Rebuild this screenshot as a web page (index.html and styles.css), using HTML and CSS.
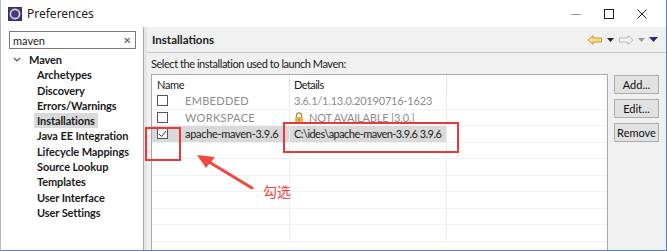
FILE: index.html
```html
<!DOCTYPE html>
<html lang="zh-CN">
<head>
  <meta charset="UTF-8">
  <title>Preferences</title>
  <link rel="stylesheet" href="styles.css">
</head>
<body>
  <div class="window">
    <div class="titlebar">
      <svg class="app-icon" width="14" height="14" viewBox="0 0 14 14">
        <rect x="0.5" y="0.5" width="13" height="13" fill="#4b3b78" stroke="#3a2c63"/>
        <circle cx="7" cy="7" r="4.6" fill="none" stroke="#d8d8e0" stroke-width="1.6"/>
        <circle cx="7" cy="7" r="2.2" fill="#4b3b78"/>
      </svg>
      <span class="title">Preferences</span>
      <div class="win-controls">
        <span class="win-btn">
          <svg width="12" height="12" viewBox="0 0 12 12"><line x1="1" y1="6.5" x2="11" y2="6.5" stroke="#999" stroke-width="1"/></svg>
        </span>
        <span class="win-btn">
          <svg width="12" height="12" viewBox="0 0 12 12"><rect x="1.5" y="1.5" width="9" height="9" fill="none" stroke="#222" stroke-width="1"/></svg>
        </span>
        <span class="win-btn">
          <svg width="12" height="12" viewBox="0 0 12 12"><path d="M1.5 1.5 L10.5 10.5 M10.5 1.5 L1.5 10.5" stroke="#222" stroke-width="1"/></svg>
        </span>
      </div>
    </div>

    <div class="main">
      <div class="sidebar">
        <div class="search">
          <span>maven</span>
          <span class="clear">✕</span>
        </div>
        <ul class="tree">
          <li class="root">
            <svg class="chev" width="8" height="6" viewBox="0 0 8 6"><path d="M1 1 L4 4 L7 1" fill="none" stroke="#555" stroke-width="1.2"/></svg>
            Maven
          </li>
          <li>Archetypes</li>
          <li>Discovery</li>
          <li>Errors/Warnings</li>
          <li class="selected">Installations</li>
          <li>Java EE Integration</li>
          <li>Lifecycle Mappings</li>
          <li>Source Lookup</li>
          <li>Templates</li>
          <li>User Interface</li>
          <li>User Settings</li>
        </ul>
      </div>

      <div class="content">
        <div class="page-head">
          <span class="page-title">Installations</span>
          <div class="nav">
            <svg width="16" height="12" viewBox="0 0 16 12"><path d="M1 6 L6 1.5 L6 4 L14.5 4 L14.5 8 L6 8 L6 10.5 Z" fill="#f6dc8e" stroke="#c99b2c" stroke-width="1"/></svg>
            <svg width="7" height="4" viewBox="0 0 7 4"><path d="M0 0 L7 0 L3.5 4 Z" fill="#222"/></svg>
            <svg width="16" height="12" viewBox="0 0 16 12"><path d="M15 6 L10 1.5 L10 4 L1.5 4 L1.5 8 L10 8 L10 10.5 Z" fill="#f4f4f4" stroke="#bbb" stroke-width="1"/></svg>
            <svg width="7" height="4" viewBox="0 0 7 4"><path d="M0 0 L7 0 L3.5 4 Z" fill="#999"/></svg>
            <svg width="9" height="5" viewBox="0 0 9 5"><path d="M0 0 L9 0 L4.5 5 Z" fill="#3b2570"/></svg>
          </div>
        </div>

        <div class="page-body">
          <p class="hint">Select the installation used to launch Maven:</p>
          <div class="table-area">
            <div class="table">
              <div class="row head">
                <div class="cell c-name">Name</div>
                <div class="cell c-details">Details</div>
                <div class="cell c-rest"></div>
              </div>
              <div class="row dim">
                <div class="cell c-name"><span class="check"></span><span class="label">EMBEDDED</span></div>
                <div class="cell c-details">3.6.1/1.13.0.20190716-1623</div>
                <div class="cell c-rest"></div>
              </div>
              <div class="row dim">
                <div class="cell c-name"><span class="check"></span><span class="label">WORKSPACE</span></div>
                <div class="cell c-details">
                  <svg class="lock" width="10" height="11" viewBox="0 0 10 11"><path d="M2.5 5 L2.5 3.3 A2.5 2.5 0 0 1 7.5 3.3 L7.5 5" fill="none" stroke="#a88a3a" stroke-width="1.2"/><rect x="1" y="5" width="8" height="5.5" rx="1" fill="#e8b84a"/><rect x="4.5" y="6.5" width="1" height="2" fill="#8a6a1a"/></svg>
                  NOT AVAILABLE [3.0.]
                </div>
                <div class="cell c-rest"></div>
              </div>
              <div class="row sel">
                <div class="cell c-name"><span class="check checked">
                  <svg width="9" height="8" viewBox="0 0 9 8"><path d="M1 4 L3.5 6.5 L8 1" fill="none" stroke="#333" stroke-width="1"/></svg>
                </span><span class="label">apache-maven-3.9.6</span></div>
                <div class="cell c-details">C:\ides\apache-maven-3.9.6 3.9.6</div>
                <div class="cell c-rest"></div>
              </div>
              <div class="row"><div class="cell c-name"></div><div class="cell c-details"></div><div class="cell c-rest"></div></div>
              <div class="row"><div class="cell c-name"></div><div class="cell c-details"></div><div class="cell c-rest"></div></div>
              <div class="row"><div class="cell c-name"></div><div class="cell c-details"></div><div class="cell c-rest"></div></div>
              <div class="row"><div class="cell c-name"></div><div class="cell c-details"></div><div class="cell c-rest"></div></div>
              <div class="row"><div class="cell c-name"></div><div class="cell c-details"></div><div class="cell c-rest"></div></div>
              <div class="row"><div class="cell c-name"></div><div class="cell c-details"></div><div class="cell c-rest"></div></div>
            </div>
            <div class="buttons">
              <button>Add...</button>
              <button>Edit...</button>
              <button>Remove</button>
            </div>
          </div>
        </div>
      </div>
    </div>

    <!-- red annotation overlay -->
    <div class="mark mark-check"></div>
    <div class="mark mark-path"></div>
    <svg class="arrow" width="70" height="40" viewBox="0 0 70 40">
      <path d="M57 35 L14 9" stroke="#f2473f" stroke-width="3" stroke-linecap="round"/>
      <path d="M2 2 L20 4 L11 15 Z" fill="#f2473f"/>
    </svg>
    <span class="note">勾选</span>
  </div>
</body>
</html>
```

FILE: styles.css
```css
* {
  box-sizing: border-box;
}

body {
  margin: 0;
  font-family: Lato, "Noto Sans CJK SC", sans-serif;
  font-size: 11px;
  letter-spacing: -0.3px;
  color: #1a1a1a;
  background: #fff;
}

.window {
  position: relative;
  width: 667px;
  height: 251px;
  border: 1px solid #5b7fc0;
  border-left-color: #b8b8c0;
  border-top: none;
  overflow: hidden;
  display: flex;
  flex-direction: column;
  background: #fff;
}

.titlebar {
  height: 27px;
  display: flex;
  align-items: center;
  padding-left: 7px;
  background: #fff;
}

.app-icon {
  margin-right: 5px;
}

.title {
  font-family: "Noto Sans", sans-serif;
  font-size: 12px;
  letter-spacing: 0;
  color: #222;
}

.win-controls {
  margin-left: auto;
  display: flex;
  margin-right: 8px;
}

.win-btn {
  width: 33px;
  display: flex;
  justify-content: center;
}

.main {
  flex: 1;
  display: flex;
  min-height: 0;
}

.sidebar {
  width: 143px;
  border-right: 1px solid #a9a9a9;
  background: #fff;
  padding: 4px 0 0 8px;
}

.search {
  width: 127px;
  height: 18px;
  border: 1px solid #7a7a7a;
  display: flex;
  align-items: center;
  padding: 0 4px 0 3px;
  letter-spacing: 0;
}

.clear {
  margin-left: auto;
  font-size: 10px;
  color: #555;
}

.tree {
  list-style: none;
  margin: 3px 0 0;
  padding: 0;
  font-weight: bold;
  letter-spacing: -0.1px;
}

.tree li {
  height: 15.3px;
  line-height: 15px;
  padding-left: 28px;
  white-space: nowrap;
}

.tree li.root {
  padding-left: 4px;
  display: flex;
  align-items: center;
}

.chev {
  margin-right: 8px;
}

.tree li.selected {
  background: #d9d9d9;
  width: fit-content;
  margin-left: 25px;
  padding: 0 3px;
}

.content {
  flex: 1;
  display: flex;
  flex-direction: column;
  background: #f0f0f0;
  border-left: 3px solid #e4e4e4;
}

.page-head {
  height: 26px;
  display: flex;
  align-items: center;
  padding: 0 8px 0 5px;
  border-bottom: 1px solid #c8c8c8;
}

.page-title {
  font-weight: bold;
  font-size: 11.5px;
  letter-spacing: 0;
}

.nav {
  margin-left: auto;
  display: flex;
  align-items: center;
  gap: 4px;
}

.page-body {
  flex: 1;
  display: flex;
  flex-direction: column;
  padding: 3px 0 0 4px;
  min-height: 0;
}

.hint {
  margin: 0 0 2px;
  line-height: 16px;
  letter-spacing: -0.45px;
}

.table-area {
  flex: 1;
  display: flex;
  gap: 6px;
  min-height: 0;
}

.table {
  width: 457px;
  border: 1px solid #a8a8a8;
  border-bottom: none;
  background: #fff;
  overflow: hidden;
}

.row {
  display: flex;
  height: 16.5px;
  border-bottom: 1px solid #f1f1f1;
}

.row.head {
  height: 18px;
  border-bottom: none;
}

.cell {
  display: flex;
  align-items: center;
  white-space: nowrap;
  overflow: hidden;
}

.c-name {
  width: 138px;
  padding-left: 5px;
  border-right: 1px solid #ececec;
}

.c-details {
  width: 157px;
  padding-left: 4px;
  border-right: 1px solid #ececec;
  letter-spacing: -0.55px;
}

.c-rest {
  flex: 1;
}

.row.head .c-name,
.row.head .c-details {
  border-right-color: #e4e4e4;
}

.row.dim {
  color: #8c8c8c;
}

.row.dim .label {
  letter-spacing: 0.3px;
}

.row.dim .c-details {
  letter-spacing: -0.2px;
}

.row.sel .c-name,
.row.sel .c-details {
  background: #d9d9d9;
}

.check {
  flex: none;
  width: 11px;
  height: 11px;
  border: 1px solid #555;
  background: #fff;
  margin-right: 17px;
  display: flex;
  align-items: center;
  justify-content: center;
}

.lock {
  margin-right: 5px;
}

.buttons {
  display: flex;
  flex-direction: column;
  gap: 5px;
  padding-top: 1px;
}

.buttons button {
  width: 45px;
  height: 19px;
  padding: 0;
  font-family: Lato, sans-serif;
  font-size: 11px;
  background: #e1e1e1;
  border: 1px solid #adadad;
  color: #111;
}

/* annotation overlay */
.mark {
  position: absolute;
  border: 2px solid #e8383a;
}

.mark-check {
  left: 144px;
  top: 127px;
  width: 36px;
  height: 34px;
}

.mark-path {
  left: 282px;
  top: 122px;
  width: 176px;
  height: 31px;
}

.arrow {
  position: absolute;
  left: 194px;
  top: 153px;
}

.note {
  position: absolute;
  left: 262px;
  top: 181px;
  font-family: "Noto Sans CJK SC", sans-serif;
  font-size: 14px;
  letter-spacing: 0;
  color: #f2473f;
}
```
